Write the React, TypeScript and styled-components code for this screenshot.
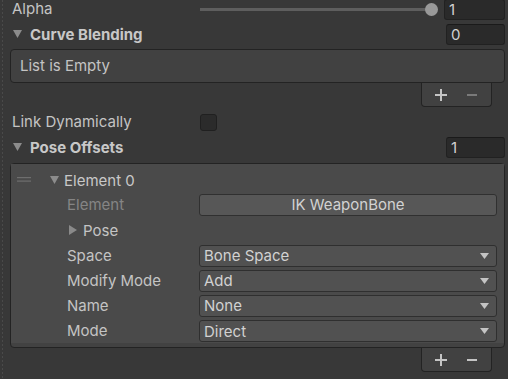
import React from "react";
import styled, { createGlobalStyle } from "styled-components";

const GlobalStyle = createGlobalStyle`
  html, body { margin: 0; padding: 0; background: #383838; }
  body { font-family: Inter, "Noto Sans", sans-serif; font-size: 15px; color: #c4c4c4; }
  * { box-sizing: border-box; }
`;

const Page = styled.div`
  min-height: 100vh;
  padding: 0 3px 0 10px;
  background-color: #383838;
  background-image: linear-gradient(to bottom, #4a4a4a 50%, transparent 50%);
  background-size: 1px 4px;
  background-position: 2px 0;
  background-repeat: repeat-y;
  display: flex;
  flex-direction: column;
`;

const FieldRow = styled.div<{ $top?: number }>`
  display: grid;
  grid-template-columns: 188px 1fr;
  align-items: center;
  height: 22px;
  padding-left: 2px;
  margin-top: ${(p) => p.$top ?? 0}px;
`;

const Label = styled.span<{ $dim?: boolean }>`
  color: ${(p) => (p.$dim ? "#858585" : "#c4c4c4")};
  white-space: nowrap;
  line-height: 22px;
`;

const SliderCell = styled.div`
  display: flex;
  align-items: center;
`;

const Track = styled.div`
  flex: 1;
  height: 3px;
  background: #5e5e5e;
`;

const Thumb = styled.div`
  width: 13px;
  height: 13px;
  border-radius: 50%;
  background: #999999;
  margin-left: -6px;
  flex: none;
`;

const NumberField = styled.div<{ $width: number; $gap?: number }>`
  width: ${(p) => p.$width}px;
  height: 21px;
  margin-left: ${(p) => p.$gap ?? 0}px;
  background: #2a2a2a;
  border: 1px solid #212121;
  border-top-color: #1a1a1a;
  border-radius: 3px;
  color: #d2d2d2;
  padding-left: 4px;
  line-height: 19px;
  flex: none;
`;

const HeaderRow = styled.div<{ $top?: number }>`
  display: flex;
  align-items: center;
  height: 22px;
  padding-left: 3px;
  margin-top: ${(p) => p.$top ?? 0}px;
`;

const HeaderTitle = styled.span`
  font-weight: 700;
  color: #c8c8c8;
  margin-left: 8px;
  flex: 1;
`;

const ListBox = styled.div<{ $top: number }>`
  margin-top: ${(p) => p.$top}px;
  background: #414141;
  border: 1px solid #232323;
  border-radius: 4px;
`;

const EmptyText = styled.div`
  height: 32px;
  line-height: 32px;
  padding-left: 9px;
  color: #c4c4c4;
`;

const Footer = styled.div`
  align-self: flex-end;
  margin-right: 13px;
  width: 71px;
  height: 24px;
  background: #414141;
  border: 1px solid #232323;
  border-top: none;
  border-radius: 0 0 4px 4px;
  display: flex;
  align-items: center;
  padding-left: 13px;
  gap: 20px;
`;

const Checkbox = styled.div`
  width: 17px;
  height: 17px;
  background: #2b2b2b;
  border: 1px solid #202020;
  border-radius: 3px;
`;

const ElementsList = styled.div`
  margin-top: 5px;
  background: #424242;
  border: 1px solid #232323;
  border-radius: 4px;
  padding: 0 0 4px 0;
`;

const ElementBody = styled.div`
  background: #4a4a4a;
  padding: 5px 7px 1px 0;
  display: flex;
  flex-direction: column;
  gap: 3.2px;
`;

const ElementHeader = styled.div`
  display: flex;
  align-items: center;
  height: 22px;
  padding-left: 6px;
`;

const ElementTitle = styled.span`
  margin-left: 5px;
  color: #c8c8c8;
`;

const PropRow = styled.div`
  display: grid;
  grid-template-columns: 132px 1fr;
  align-items: center;
  height: 22px;
  padding-left: 56px;
`;

const FoldRow = styled.div`
  display: flex;
  align-items: center;
  height: 22px;
  padding-left: 58px;
`;

const FoldTitle = styled.span`
  margin-left: 6px;
  color: #c4c4c4;
`;

const ObjectButton = styled.div`
  height: 22px;
  background: #575757;
  border: 1px solid #303030;
  border-radius: 3px;
  color: #d2d2d2;
  text-align: center;
  line-height: 20px;
`;

const Dropdown = styled.div`
  height: 22px;
  background: #515151;
  border: 1px solid #2f2f2f;
  border-radius: 3px;
  color: #d2d2d2;
  display: flex;
  align-items: center;
  justify-content: space-between;
  padding: 0 7px 0 4px;
`;

const Down = ({ color = "#8c8c8c", w = 9, h = 8 }: { color?: string; w?: number; h?: number }) => (
  <svg width={w} height={h} viewBox={`0 0 ${w} ${h}`} style={{ flex: "none" }}>
    <polygon points={`0,0 ${w},0 ${w / 2},${h}`} fill={color} />
  </svg>
);

const Right = () => (
  <svg width="8" height="10" viewBox="0 0 8 10" style={{ flex: "none" }}>
    <polygon points="0,0 8,5 0,10" fill="#8a8a8a" />
  </svg>
);

const Handle = () => (
  <svg width="14" height="6" viewBox="0 0 14 6" style={{ flex: "none" }}>
    <rect x="0" y="0" width="14" height="1.2" fill="#6e6e6e" />
    <rect x="0" y="3.5" width="14" height="1.2" fill="#6e6e6e" />
  </svg>
);

const Plus = () => (
  <svg width="12" height="12" viewBox="0 0 12 12" style={{ flex: "none" }}>
    <rect x="5" y="0" width="2" height="12" fill="#c4c4c4" />
    <rect x="0" y="5" width="12" height="2" fill="#c4c4c4" />
  </svg>
);

const Minus = ({ dim }: { dim?: boolean }) => (
  <svg width="10" height="12" viewBox="0 0 10 12" style={{ flex: "none" }}>
    <rect x="0" y="5" width="10" height="2" fill={dim ? "#7a7a7a" : "#c4c4c4"} />
  </svg>
);

const props = [
  { label: "Space", value: "Bone Space" },
  { label: "Modify Mode", value: "Add" },
  { label: "Name", value: "None" },
  { label: "Mode", value: "Direct" },
];

export default function App() {
  return (
    <>
      <GlobalStyle />
      <Page>
        <FieldRow $top={-2}>
          <Label>Alpha</Label>
          <SliderCell>
            <Track />
            <Thumb />
            <NumberField $width={61} $gap={6}>1</NumberField>
          </SliderCell>
        </FieldRow>

        <HeaderRow $top={3}>
          <Down />
          <HeaderTitle>Curve Blending</HeaderTitle>
          <NumberField $width={59}>0</NumberField>
        </HeaderRow>

        <ListBox $top={4}>
          <EmptyText>List is Empty</EmptyText>
        </ListBox>
        <Footer>
          <Plus />
          <Minus dim />
        </Footer>

        <FieldRow $top={4}>
          <Label>Link Dynamically</Label>
          <Checkbox />
        </FieldRow>

        <HeaderRow $top={3}>
          <Down />
          <HeaderTitle>Pose Offsets</HeaderTitle>
          <NumberField $width={59}>1</NumberField>
        </HeaderRow>

        <ElementsList>
          <ElementBody>
            <ElementHeader>
              <Handle />
              <span style={{ width: 19, flex: "none" }} />
              <Down />
              <ElementTitle>Element 0</ElementTitle>
            </ElementHeader>
            <PropRow>
              <Label $dim>Element</Label>
              <ObjectButton>IK WeaponBone</ObjectButton>
            </PropRow>
            <FoldRow>
              <Right />
              <FoldTitle>Pose</FoldTitle>
            </FoldRow>
            {props.map((p) => (
              <PropRow key={p.label}>
                <Label>{p.label}</Label>
                <Dropdown>
                  <span>{p.value}</span>
                  <Down color="#c4c4c4" w={9} h={6} />
                </Dropdown>
              </PropRow>
            ))}
          </ElementBody>
        </ElementsList>
        <Footer>
          <Plus />
          <Minus />
        </Footer>
      </Page>
    </>
  );
}
